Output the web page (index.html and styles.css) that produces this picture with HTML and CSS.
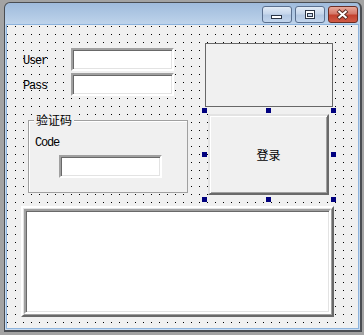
FILE: index.html
```html
<!DOCTYPE html>
<html lang="zh-CN">
<head>
    <meta charset="UTF-8">
    <title>Form1</title>
    <link rel="stylesheet" href="styles.css">
</head>
<body>
    <div class="window">
        <div class="titlebar">
            <div class="cap-btn">
                <svg width="30" height="17" viewBox="0 0 30 17"><rect x="9.5" y="9.5" width="10" height="3" fill="#fff" stroke="#2b3545"/></svg>
            </div>
            <div class="cap-btn">
                <svg width="30" height="17" viewBox="0 0 30 17"><rect x="10.5" y="4.5" width="9" height="8" fill="#fff" stroke="#2b3545"/><rect x="12.5" y="7.5" width="5" height="3" fill="#c8d8ec" stroke="#2b3545"/></svg>
            </div>
            <div class="cap-btn close">
                <svg width="30" height="17" viewBox="0 0 30 17"><path d="M10 4.5 L19 12.5 M19 4.5 L10 12.5" stroke="#5a2a22" stroke-width="4"/><path d="M10.5 5 L18.5 12 M18.5 5 L10.5 12" stroke="#fff" stroke-width="2"/></svg>
            </div>
        </div>

        <div class="client">
            <div class="top">
                <div class="left">
                    <div class="fields">
                        <span class="label field-label">User</span>
                        <div class="textbox"></div>
                        <span class="label field-label">Pass</span>
                        <div class="textbox"></div>
                    </div>

                    <div class="group">
                        <div class="group-title">验证码</div>
                        <div class="label code-label">Code</div>
                        <div class="textbox code-box"></div>
                    </div>
                </div>

                <div class="right">
                    <div class="panel"></div>
                    <div class="login">
                        <span>登录</span>
                        <i class="handle h-tl"></i>
                        <i class="handle h-tc"></i>
                        <i class="handle h-tr"></i>
                        <i class="handle h-ml"></i>
                        <i class="handle h-mr"></i>
                        <i class="handle h-bl"></i>
                        <i class="handle h-bc"></i>
                        <i class="handle h-br"></i>
                    </div>
                </div>
            </div>

            <div class="memo">
                <div class="memo-inner"></div>
            </div>
        </div>
    </div>
</body>
</html>
```

FILE: styles.css
```css
body {
    margin: 0;
    background-color: #a3a3a3;
    font-family: "Noto Sans CJK SC", sans-serif;
}
.window {
    box-sizing: border-box;
    width: 358px;
    height: 330px;
    margin: 2px 0 0 4px;
    border: 1px solid #4a4d52;
    border-right-width: 2px;
    border-bottom-width: 2px;
    border-radius: 6px 6px 0 0;
    padding: 0 1px 1px 1px;
    background: linear-gradient(#9fbbdc, #bfd4eb 22px, #c8dbf0);
    display: flex;
    flex-direction: column;
}
.titlebar {
    height: 21px;
    display: flex;
    justify-content: flex-end;
    align-items: flex-start;
    gap: 3px;
    padding: 3px 1px 0 0;
    box-sizing: border-box;
}
.cap-btn {
    width: 30px;
    height: 17px;
    box-sizing: border-box;
    border: 1px solid #5a6f8e;
    border-radius: 3px;
    background: linear-gradient(#e2ebf6, #c6d6eb 45%, #b3c8e3 55%, #c2d5ec);
    position: relative;
    z-index: 1;
}
.cap-btn svg {
    display: block;
    margin: -1px;
}
.close {
    border-color: #6b2d24;
    background: linear-gradient(#e8a99b, #d4796a 45%, #c3412e 55%, #cf5a45);
}
.client {
    flex: 1;
    border: 1px solid #8db3dc;
    background: conic-gradient(at 1px 1px, transparent 75%, #000 0) 0 1px / 8px 8px, #f0f0f0;
}
.top {
    display: flex;
}
.left {
    width: 180px;
    padding-top: 23px;
}
.fields {
    display: grid;
    grid-template-columns: 48px 103px;
    row-gap: 2px;
    align-items: center;
    margin-left: 16px;
}
.label {
    font-family: "Liberation Mono", monospace;
    font-size: 12px;
    letter-spacing: -1.2px;
    color: #000;
    line-height: 12px;
}
.field-label {
    padding-top: 2px;
}
.textbox {
    box-sizing: border-box;
    height: 23px;
    width: 103px;
    background: #fff;
    border: 2px solid;
    border-color: #a0a0a0 #fff #fff #a0a0a0;
    box-shadow: inset 1px 1px #696969, inset -1px -1px #e3e3e3;
}
.group {
    box-sizing: border-box;
    margin: 24px 0 0 21px;
    width: 160px;
    height: 73px;
    border: 1px solid #a0a0a0;
    box-shadow: inset 1px 1px #fff;
    background: #f0f0f0;
}
.group-title {
    width: fit-content;
    margin: -8px 0 0 5px;
    padding: 0 2px;
    background: #f0f0f0;
    font-size: 12px;
    line-height: 14px;
}
.code-label {
    margin: 10px 0 0 6px;
}
.code-box {
    margin: 6px 0 0 30px;
}
.right {
    margin-left: 18px;
    padding-top: 18px;
}
.panel {
    box-sizing: border-box;
    width: 128px;
    height: 64px;
    border: 1px solid #676767;
    background: #f0f0f0;
}
.login {
    position: relative;
    box-sizing: border-box;
    width: 121px;
    height: 81px;
    margin: 7px 0 0 3px;
    border: 2px solid;
    border-color: #e3e3e3 #696969 #696969 #e3e3e3;
    box-shadow: inset 1px 1px #fff, inset -1px -1px #a0a0a0;
    background: #f0f0f0;
    display: flex;
    align-items: center;
    justify-content: center;
    font-size: 12px;
}
.handle {
    position: absolute;
    width: 5px;
    height: 5px;
    background: #00007f;
}
.h-tl, .h-tc, .h-tr { top: -8px; }
.h-bl, .h-bc, .h-br { bottom: -9px; }
.h-ml, .h-mr { top: calc(50% - 3px); }
.h-tl, .h-ml, .h-bl { left: -8px; }
.h-tr, .h-mr, .h-br { right: -9px; }
.h-tc, .h-bc { left: calc(50% - 3px); }
.memo {
    box-sizing: border-box;
    width: 313px;
    height: 111px;
    margin: 11px 0 0 14px;
    border: 2px solid;
    border-color: #fff #696969 #696969 #fff;
    box-shadow: inset 1px 1px #e3e3e3, inset -1px -1px #a0a0a0;
}
.memo-inner {
    box-sizing: border-box;
    height: calc(100% - 2px);
    margin: 1px;
    border: 2px solid;
    border-color: #a0a0a0 #fff #fff #a0a0a0;
    box-shadow: inset 1px 1px #696969, inset -1px -1px #e3e3e3;
    background: #fff;
}
```
